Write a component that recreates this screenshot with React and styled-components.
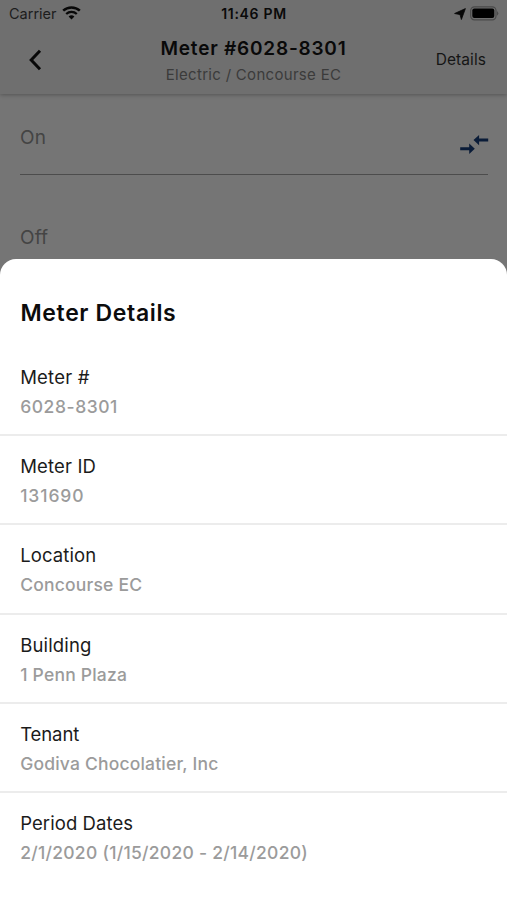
import React from "react";
import styled, { createGlobalStyle } from "styled-components";

const GlobalStyle = createGlobalStyle`
  * { box-sizing: border-box; }
  body { margin: 0; background: #757575; }
`;

const Screen = styled.div`
  width: 507px;
  height: 900px;
  overflow: hidden;
  display: flex;
  flex-direction: column;
  background: #757575;
  font-family: Inter, "Liberation Sans", sans-serif;
`;

const Header = styled.header`
  flex: none;
  height: 94px;
  background: #6f6f6f;
  box-shadow: 0 1px 4px rgba(0, 0, 0, 0.28);
`;

const StatusBar = styled.div`
  height: 27px;
  padding: 0 8px 0 9px;
  display: grid;
  grid-template-columns: 1fr auto 1fr;
  align-items: center;
`;

const Carrier = styled.div`
  display: flex;
  align-items: center;
  gap: 5px;
  font-size: 14.5px;
  line-height: 27px;
  color: #1d1d1d;
  svg { margin-bottom: 2px; }
`;

const Clock = styled.div`
  font-size: 14px;
  font-weight: 600;
  line-height: 27px;
  letter-spacing: 0.7px;
  color: #0a0a0a;
`;

const StatusIcons = styled.div`
  display: flex;
  align-items: center;
  justify-content: flex-end;
  gap: 4px;
`;

const NavBar = styled.div`
  height: 67px;
  padding: 0 21px;
  display: grid;
  grid-template-columns: 1fr auto 1fr;
  align-items: center;
`;

const BackButton = styled.button`
  justify-self: start;
  display: flex;
  margin: 0 0 2px 3px;
  padding: 0;
  border: 0;
  background: none;
`;

const TitleBlock = styled.div`
  display: flex;
  flex-direction: column;
  align-items: center;
  padding-top: 1px;
  white-space: nowrap;
`;

const Title = styled.h1`
  margin: 0;
  font-size: 19px;
  font-weight: 600;
  line-height: 26px;
  letter-spacing: 0.78px;
  color: #090909;
`;

const Subtitle = styled.div`
  font-size: 15px;
  line-height: 25px;
  letter-spacing: 0.3px;
  color: #3b3b3b;
`;

const DetailsButton = styled.button`
  justify-self: end;
  margin-bottom: 2px;
  padding: 0;
  border: 0;
  background: none;
  font: 400 15.5px/24px Inter, "Liberation Sans", sans-serif;
  letter-spacing: 0.08px;
  color: #151515;
`;

const Form = styled.main`
  flex: none;
  height: 165px;
  padding: 0 19px 0 20px;
`;

const Field = styled.div`
  height: ${(p) => p.$height};
  padding-top: ${(p) => p.$top};
  border-bottom: ${(p) => (p.$line ? "1px solid #4c4c4c" : "0")};
  display: flex;
  justify-content: space-between;
  align-items: flex-start;
  font-size: 19px;
  line-height: 26px;
  letter-spacing: 0.1px;
  color: #444;
`;

const ArrowSlot = styled.span`
  display: flex;
  margin: 9px -1.3px 0 0;
`;

const Sheet = styled.section`
  flex: 1;
  background: #fff;
  border-radius: 16px 16px 0 0;
  overflow: hidden;
`;

const SheetTitle = styled.h2`
  margin: 0;
  padding: 38px 20.5px 0;
  font-size: 23px;
  font-weight: 600;
  line-height: 32px;
  letter-spacing: 0.64px;
  color: #0c0c0c;
`;

const DetailList = styled.dl`
  margin: 18px 0 0;
`;

const DetailRow = styled.div`
  height: 89.2px;
  padding: 17px 20.2px 0;
  border-bottom: 2px solid #ececec;
  &:last-child { border-bottom: 0; }
`;

const Label = styled.dt`
  font-size: 18.5px;
  line-height: 26px;
  letter-spacing: ${(p) => p.$tracking};
  color: #1b1b1b;
`;

const Value = styled.dd`
  margin: 4px 0 0;
  font-size: 17.5px;
  font-weight: 500;
  line-height: 26px;
  letter-spacing: ${(p) => p.$tracking};
  color: #9b9b9b;
`;

const WifiIcon = () => (
  <svg width="19" height="14" viewBox="0 0 19 14" fill="none" stroke="#080808">
    <path d="M1.2 4.7C5.8 .3 13.2 .3 17.8 4.7" strokeWidth="2.5" />
    <path d="M4.2 8C7.2 5.2 11.8 5.2 14.8 8" strokeWidth="2.3" />
    <path d="M9.5 13.4 6.6 10.5Q9.5 8.1 12.4 10.5Z" fill="#080808" stroke="none" />
  </svg>
);

const LocationIcon = () => (
  <svg width="12" height="12" viewBox="0 0 12 12">
    <path d="M11.4.6 7.4 11.5 6 6.6.6 5.5Z" fill="#080808" stroke="#080808" strokeWidth=".8" strokeLinejoin="round" />
  </svg>
);

const BatteryIcon = () => (
  <svg width="29" height="15" viewBox="0 0 29 15">
    <rect x=".7" y=".8" width="25.3" height="13" rx="3.7" fill="none" stroke="#4a4a4a" strokeWidth="1.2" />
    <rect x="2.3" y="2.5" width="22" height="9.6" rx="2" fill="#000" />
    <path d="M27 4.9Q29.6 7.3 27 9.7Z" fill="#4a4a4a" />
  </svg>
);

const BackIcon = () => (
  <svg width="22" height="22" viewBox="0 0 22 22" fill="none" stroke="#070707" strokeWidth="3">
    <path d="m16 1.8-8.8 9.2 8.8 9.2" />
  </svg>
);

const CompareArrowsIcon = () => (
  <svg width="30" height="22" viewBox="0 0 30 22" fill="#0a1c38">
    <path d="M1.2 13.3h9V9.6l5.6 5.2-5.6 5.2v-3.8h-9Z" />
    <path d="M29.2 4.6h-9.1V.9l-5.6 5.2 5.6 5.2V7.5h9.1Z" />
  </svg>
);

const details = [
  { label: "Meter #", value: "6028-8301", lt: "0.2px", vt: "0.55px" },
  { label: "Meter ID", value: "131690", lt: "0.15px", vt: "0.9px" },
  { label: "Location", value: "Concourse EC", lt: "0.1px", vt: "0.2px" },
  { label: "Building", value: "1 Penn Plaza", lt: "0.15px", vt: "0.22px" },
  { label: "Tenant", value: "Godiva Chocolatier, Inc", lt: "-0.1px", vt: "0.19px" },
  { label: "Period Dates", value: "2/1/2020 (1/15/2020 - 2/14/2020)", lt: "0.08px", vt: "0.27px" },
];

export default function App() {
  return (
    <Screen>
      <GlobalStyle />
      <Header>
        <StatusBar>
          <Carrier>Carrier<WifiIcon /></Carrier>
          <Clock>11:46 PM</Clock>
          <StatusIcons><LocationIcon /><BatteryIcon /></StatusIcons>
        </StatusBar>
        <NavBar>
          <BackButton aria-label="Back"><BackIcon /></BackButton>
          <TitleBlock>
            <Title>Meter #6028-8301</Title>
            <Subtitle>Electric / Concourse EC</Subtitle>
          </TitleBlock>
          <DetailsButton>Details</DetailsButton>
        </NavBar>
      </Header>
      <Form>
        <Field $height="81px" $top="31px" $line>
          On
          <ArrowSlot><CompareArrowsIcon /></ArrowSlot>
        </Field>
        <Field $height="84px" $top="50px">Off</Field>
      </Form>
      <Sheet>
        <SheetTitle>Meter Details</SheetTitle>
        <DetailList>
          {details.map((d) => (
            <DetailRow key={d.label}>
              <Label $tracking={d.lt}>{d.label}</Label>
              <Value $tracking={d.vt}>{d.value}</Value>
            </DetailRow>
          ))}
        </DetailList>
      </Sheet>
    </Screen>
  );
}
